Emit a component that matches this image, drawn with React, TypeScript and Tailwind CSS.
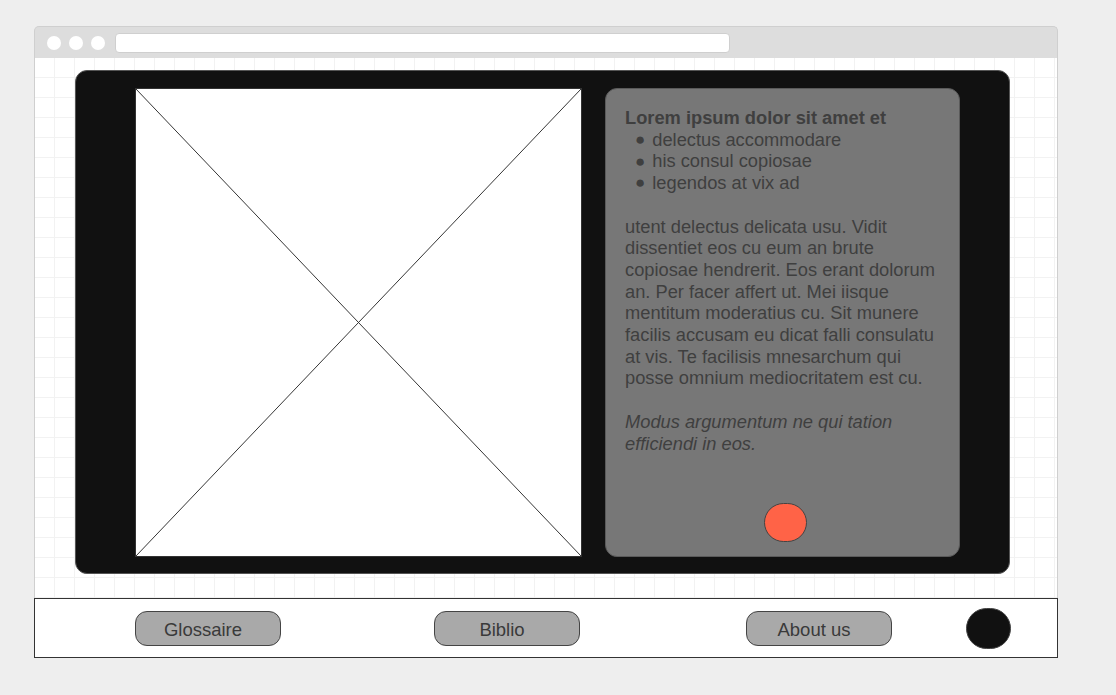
import type { ReactNode } from 'react';

const font = { fontFamily: '"Liberation Sans", Arial, sans-serif' };

function NavButton({ children }: { children: ReactNode }) {
  return (
    <button className="flex h-[35px] w-[146px] items-center justify-center rounded-[12px] border border-[#444] bg-[#a9a9a9] pr-[10px] pt-[4px] text-[18.5px] text-[#3a3a3a]">
      {children}
    </button>
  );
}

function ImagePlaceholder() {
  return (
    <div className="relative h-[469px] w-[447px] shrink-0 border border-[#333] bg-white">
      <svg className="absolute inset-0 h-full w-full" viewBox="0 0 447 469" preserveAspectRatio="none">
        <line x1="0" y1="0" x2="447" y2="469" stroke="#333" strokeWidth="1" />
        <line x1="447" y1="0" x2="0" y2="469" stroke="#333" strokeWidth="1" />
      </svg>
    </div>
  );
}

export default function App() {
  return (
    <div className="min-h-[695px] w-full bg-[#eeeeee] pl-[34px] pt-[26px]" style={font}>
      <div className="w-[1024px]">
        {/* barre du navigateur */}
        <div className="flex h-[32px] items-center rounded-t-[5px] border border-b-0 border-[#cfcfcf] bg-[#dddddd] pl-[12px]">
          <div className="flex gap-[8px]">
            <span className="h-[14px] w-[14px] rounded-full bg-white" />
            <span className="h-[14px] w-[14px] rounded-full bg-white" />
            <span className="h-[14px] w-[14px] rounded-full bg-white" />
          </div>
          <div className="ml-[10px] h-[20px] w-[615px] rounded-[4px] border border-[#cfcfcf] bg-white" />
        </div>

        {/* zone de contenu avec grille */}
        <div className="h-[540px] border-x border-[#cfcfcf] bg-white bg-[linear-gradient(to_right,#f2f2f2_1px,transparent_1px),linear-gradient(to_bottom,#f2f2f2_1px,transparent_1px)] bg-[size:20px_20px] bg-[position:19px_19px] pl-[40px] pt-[12px]">
          <div className="flex h-[504px] w-[935px] gap-[23px] rounded-[12px] border border-[#555] bg-[#111111] pl-[59px] pt-[17px]">
            <ImagePlaceholder />
            <div className="flex h-[469px] w-[355px] flex-col rounded-[12px] border border-[#5a5a5a] bg-[#777777] px-[19px] pt-[18px] text-[18.3px] leading-[21.7px] text-[#3f3f3f]">
              <p className="font-bold">Lorem ipsum dolor sit amet et</p>
              <ul className="pl-[10px]">
                <li className="flex items-center gap-[7px]"><span className="text-[17px] leading-none">●</span>delectus accommodare</li>
                <li className="flex items-center gap-[7px]"><span className="text-[17px] leading-none">●</span>his consul copiosae</li>
                <li className="flex items-center gap-[7px]"><span className="text-[17px] leading-none">●</span>legendos at vix ad</li>
              </ul>
              <p className="mt-[21.7px]">
                utent delectus delicata usu. Vidit dissentiet eos cu eum an brute copiosae hendrerit. Eos erant dolorum an. Per facer affert ut. Mei iisque mentitum moderatius cu. Sit munere facilis accusam eu dicat falli consulatu at vis. Te facilisis mnesarchum qui posse omnium mediocritatem est cu.
              </p>
              <p className="mt-[21.7px] italic">Modus argumentum ne qui tation efficiendi in eos.</p>
              <div className="mt-auto mb-[14px] flex justify-center pl-[6px]">
                <span className="h-[39px] w-[43px] rounded-full border border-[#444] bg-[#ff6347]" />
              </div>
            </div>
          </div>
        </div>

        {/* pied de page */}
        <div className="flex h-[60px] items-center border border-[#333] bg-white pl-[100px]">
          <NavButton>Glossaire</NavButton>
          <div className="ml-[153px]">
            <NavButton>Biblio</NavButton>
          </div>
          <div className="ml-[166px]">
            <NavButton>About us</NavButton>
          </div>
          <span className="ml-[74px] h-[41px] w-[45px] rounded-full border border-[#444] bg-[#111111]" />
        </div>
      </div>
    </div>
  );
}
